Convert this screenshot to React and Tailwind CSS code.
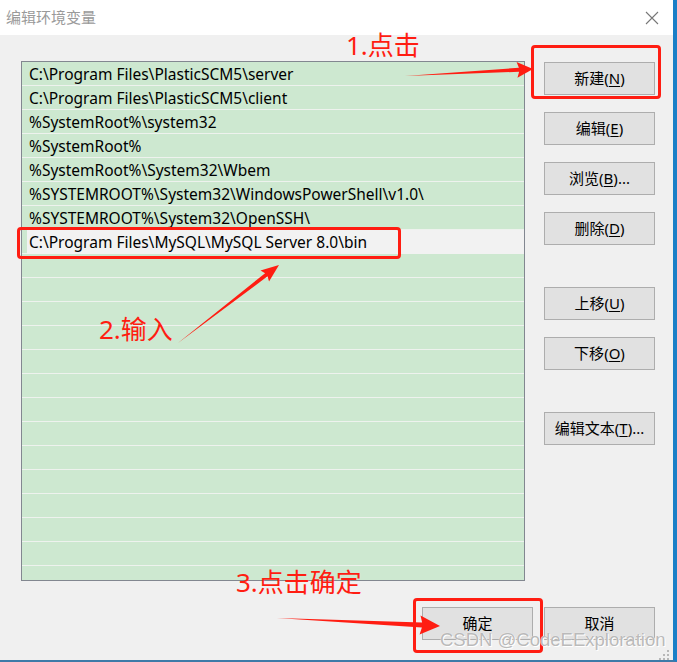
import React from 'react';

const font = { fontFamily: '"Noto Sans", "Noto Sans CJK SC", sans-serif' };

const paths = [
  'C:\\Program Files\\PlasticSCM5\\server',
  'C:\\Program Files\\PlasticSCM5\\client',
  '%SystemRoot%\\system32',
  '%SystemRoot%',
  '%SystemRoot%\\System32\\Wbem',
  '%SYSTEMROOT%\\System32\\WindowsPowerShell\\v1.0\\',
  '%SYSTEMROOT%\\System32\\OpenSSH\\',
];

function Btn({ label, hot, tail = '', className = '' }) {
  return (
    <div
      className={
        'flex h-[33px] w-[111px] items-center justify-center border border-[#adadad] bg-[#e1e1e1] text-[15px] text-black ' +
        className
      }
    >
      {label}
      {hot && (
        <>
          (<span className="underline underline-offset-2">{hot}</span>){tail}
        </>
      )}
    </div>
  );
}

// tapered red arrow: thin tail widening to the neck, then a triangular head
function Arrow({ x1, y1, x2, y2, neck = 4, head = 15, wide = 16 }) {
  const dx = x2 - x1;
  const dy = y2 - y1;
  const len = Math.hypot(dx, dy);
  const ux = dx / len;
  const uy = dy / len;
  const px = -uy;
  const py = ux;
  const bx = x2 - ux * head;
  const by = y2 - uy * head;
  const pts = [
    [x1, y1],
    [bx + (px * neck) / 2, by + (py * neck) / 2],
    [bx + (px * wide) / 2 - ux * 2, by + (py * wide) / 2 - uy * 2],
    [x2, y2],
    [bx - (px * wide) / 2 - ux * 2, by - (py * wide) / 2 - uy * 2],
    [bx - (px * neck) / 2, by - (py * neck) / 2],
  ];
  return <polygon points={pts.map((p) => p.join(',')).join(' ')} fill="#ff1d12" />;
}

export default function App() {
  const rows = Array.from({ length: 22 });

  return (
    <div
      className="relative h-[662px] w-[677px] overflow-hidden border-r-4 border-b-2 border-r-[#1b7fc7] border-b-[#3d7aa8] bg-[#f0f0f0]"
      style={font}
    >
      {/* TITLE BAR */}
      <div className="flex h-[35px] items-center justify-between bg-white pl-[6px] pr-[14px]">
        <span className="text-[15px] text-[#9a9a9a]">编辑环境变量</span>
        <svg width="14" height="14" viewBox="0 0 14 14">
          <path d="M1 1L13 13M13 1L1 13" stroke="#777" strokeWidth="1.1" />
        </svg>
      </div>

      {/* BODY */}
      <div className="flex pl-[21px] pt-[26px]">
        <div className="h-[520px] w-[504px] overflow-hidden border border-[#828790] bg-[#cde8d0]">
          {rows.map((_, i) => (
            <div
              key={i}
              className="flex h-[24px] items-center whitespace-nowrap border-b border-[#eef2ee] pl-[7px] pt-[2px] text-[15.5px] text-black"
            >
              {i < 7 && paths[i]}
              {i === 7 && (
                <div className="-ml-[2px] -mt-[2px] flex h-[24px] flex-1 items-center bg-[#f2f2f2] pl-[2px] pt-[2px]">
                  C:\Program Files\MySQL\MySQL Server 8.0\bin
                </div>
              )}
            </div>
          ))}
        </div>

        <div className="ml-[19px] mt-px flex flex-col">
          <Btn label="新建" hot="N" />
          <Btn label="编辑" hot="E" className="mt-[17px]" />
          <Btn label="浏览" hot="B" tail="..." className="mt-[17px]" />
          <Btn label="删除" hot="D" className="mt-[17px]" />
          <Btn label="上移" hot="U" className="mt-[42px]" />
          <Btn label="下移" hot="O" className="mt-[17px]" />
          <Btn label="编辑文本" hot="T" tail="..." className="mt-[42px]" />
        </div>
      </div>

      <div className="mt-[26px] flex justify-end gap-[11px] pr-[18px]">
        <Btn label="确定" />
        <Btn label="取消" />
      </div>

      {/* ANNOTATIONS */}
      <div className="pointer-events-none absolute left-[346px] top-[32px] text-[26px] leading-none text-[#ff1d12]">1.点击</div>
      <div className="pointer-events-none absolute left-[99px] top-[316px] text-[26px] leading-none text-[#ff1d12]">2.输入</div>
      <div className="pointer-events-none absolute left-[236px] top-[569px] text-[26px] leading-none text-[#ff1d12]">3.点击确定</div>

      <div className="pointer-events-none absolute left-[531px] top-[45px] h-[54px] w-[130px] rounded-[4px] border-[3px] border-[#ff1d12]" />
      <div className="pointer-events-none absolute left-[17px] top-[227px] h-[32px] w-[384px] rounded-[4px] border-[3px] border-[#ff1d12]" />
      <div className="pointer-events-none absolute left-[413px] top-[598px] h-[55px] w-[130px] rounded-[4px] border-[3px] border-[#ff1d12]" />

      <svg className="pointer-events-none absolute left-0 top-0" width="677" height="662">
        <Arrow x1={405} y1={76} x2={533} y2={69} neck={4} head={14} wide={16} />
        <Arrow x1={178} y1={343} x2={279} y2={265} neck={4} head={16} wide={14} />
        <Arrow x1={277} y1={618} x2={440} y2={626} neck={5} head={18} wide={19} />
        <g fill="#b8b8b8">
          <rect x="667" y="650" width="2" height="2" />
          <rect x="663" y="654" width="2" height="2" />
          <rect x="667" y="654" width="2" height="2" />
          <rect x="659" y="658" width="2" height="2" />
          <rect x="663" y="658" width="2" height="2" />
          <rect x="667" y="658" width="2" height="2" />
        </g>
      </svg>

      <div
        className="pointer-events-none absolute left-[440px] top-[631px] text-[18.5px] leading-none text-[#a8a8a8]/80"
        style={{ fontFamily: '"Liberation Sans", sans-serif', textShadow: '0 0 1px #fff, 1px 1px 0 #fff' }}
      >
        CSDN @CodeEExploration
      </div>
    </div>
  );
}
